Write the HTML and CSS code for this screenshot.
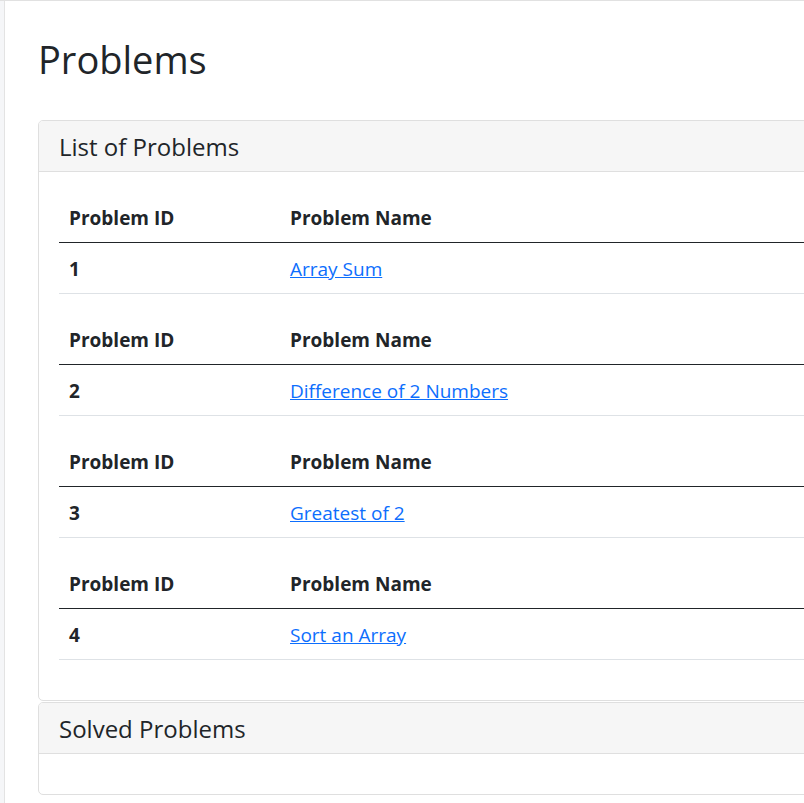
FILE: index.html
```html
<!DOCTYPE html>
<html lang="en">
<head>
<meta charset="utf-8">
<title>Problems</title>
<link rel="stylesheet" href="styles.css">
</head>
<body>
<div class="frame">
  <main class="content">
    <h1 class="page-title">Problems</h1>

    <section class="card">
      <div class="card-header"><h5 class="card-title">List of Problems</h5></div>
      <div class="card-body">
        <table class="table">
          <thead><tr><th class="col-id">Problem ID</th><th>Problem Name</th></tr></thead>
          <tbody><tr><th class="col-id">1</th><td><a href="#">Array Sum</a></td></tr></tbody>
        </table>
        <table class="table">
          <thead><tr><th class="col-id">Problem ID</th><th>Problem Name</th></tr></thead>
          <tbody><tr><th class="col-id">2</th><td><a href="#">Difference of 2 Numbers</a></td></tr></tbody>
        </table>
        <table class="table">
          <thead><tr><th class="col-id">Problem ID</th><th>Problem Name</th></tr></thead>
          <tbody><tr><th class="col-id">3</th><td><a href="#">Greatest of 2</a></td></tr></tbody>
        </table>
        <table class="table">
          <thead><tr><th class="col-id">Problem ID</th><th>Problem Name</th></tr></thead>
          <tbody><tr><th class="col-id">4</th><td><a href="#">Sort an Array</a></td></tr></tbody>
        </table>
      </div>
    </section>

    <section class="card card-solved">
      <div class="card-header"><h5 class="card-title">Solved Problems</h5></div>
      <div class="card-body"></div>
    </section>
  </main>
</div>
</body>
</html>
```

FILE: styles.css
```css
html, body {
  margin: 0;
  padding: 0;
  overflow: hidden;
}

body {
  background: #f5f6f8;
  border-top: 1px solid #e1e1e1;
  font-family: "Open Sans", "Noto Sans", sans-serif;
  font-size: 19px;
  line-height: 30px;
  color: #212529;
}

.frame {
  margin-left: 4px;
  border-left: 1px solid #e3e3e3;
  background: #ffffff;
  min-height: 802px;
  width: 1200px;
}

.content {
  padding: 0 0 40px 33px;
}

.page-title {
  margin: 0 0 37px 0;
  padding-top: 34px;
  font-size: 38px;
  line-height: 48px;
  font-weight: 400;
}

.card {
  border: 1px solid #dfdfdf;
  border-radius: 5px;
  background: #ffffff;
  overflow: hidden;
}

.card-solved {
  margin-top: 1px;
}

.card-header {
  background: #f6f6f6;
  border-bottom: 1px solid #dfdfdf;
  padding: 11px 20px 9px;
}

.card-title {
  margin: 0;
  font-size: 24px;
  line-height: 30px;
  font-weight: 400;
}

.card-body {
  padding: 20px;
  min-height: 0;
}

.table {
  width: 100%;
  border-collapse: separate;
  border-spacing: 0;
  margin-bottom: 20px;
}

.table th,
.table td {
  padding: 11px 10px 9px;
  text-align: left;
  vertical-align: top;
}

.table th {
  font-weight: 700;
}

.table thead th {
  border-bottom: 1px solid #212529;
}

.table tbody th,
.table tbody td {
  border-bottom: 1px solid #dee2e6;
}

.col-id {
  width: 201px;
}

.table a {
  color: #0d6efd;
  text-decoration: underline;
}
```
